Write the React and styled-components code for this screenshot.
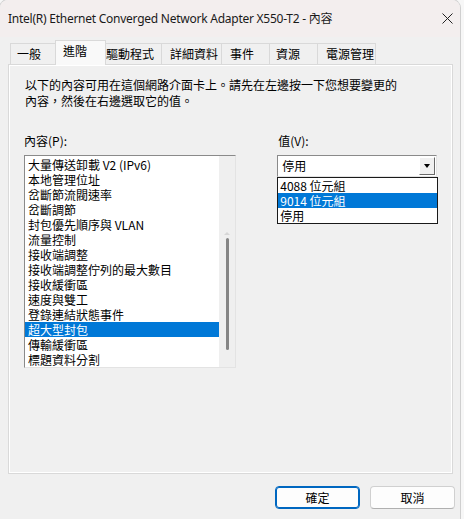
import React from 'react';
import styled, { createGlobalStyle } from 'styled-components';

const GlobalStyle = createGlobalStyle`
  html, body {
    margin: 0;
    padding: 0;
    background: #f7f7f7;
  }
  body {
    font-family: "Noto Sans CJK TC", "Noto Sans", sans-serif;
    font-size: 12px;
    color: #000;
  }
`;

const Window = styled.div`
  width: 460px;
  height: 519px;
  box-sizing: border-box;
  background: #f0f0f0;
  border-radius: 8px 8px 0 0;
  box-shadow: 0 0 0 1px #cfcfcf;
  display: flex;
  flex-direction: column;
  overflow: hidden;
`;

const TitleBar = styled.div`
  height: 37px;
  flex: none;
  background: #f3eeee;
  display: flex;
  align-items: center;
  justify-content: space-between;
  padding: 0 7px 0 8px;
`;

const Title = styled.div`
  font-family: "Noto Sans", "Noto Sans CJK TC", sans-serif;
  font-size: 12px;
  line-height: 16px;
  letter-spacing: -0.25px;
  color: #1a1a1a;
`;

const CloseIcon = () => (
  <svg width="11" height="11" viewBox="0 0 11 11">
    <path d="M0.5 0.5 L10.5 10.5 M10.5 0.5 L0.5 10.5" stroke="#222" strokeWidth="1" />
  </svg>
);

const Client = styled.div`
  padding: 3px 0 0 8px;
  display: flex;
  flex-direction: column;
`;

const TabRow = styled.div`
  height: 24px;
  display: flex;
  align-items: flex-end;
  padding-left: 2px;
  position: relative;
  z-index: 1;
`;

const Tab = styled.div`
  box-sizing: border-box;
  width: ${(p) => (p.$active ? p.$w + 4 : p.$w)}px;
  height: ${(p) => (p.$active ? 25 : 21)}px;
  margin: ${(p) => (p.$active ? '0 -2px -1px' : '0')};
  padding: ${(p) => (p.$active ? 2 : 2)}px 0 0 ${(p) => p.$pad}px;
  line-height: 16px;
  font-size: 12px;
  white-space: nowrap;
  background: ${(p) => (p.$active ? '#f9f9f9' : '#f0f0f0')};
  border: 1px solid #d9d9d9;
  border-bottom: none;
  margin-left: ${(p) => (p.$first ? 0 : p.$active ? -2 : -1)}px;
  position: relative;
  z-index: ${(p) => (p.$active ? 2 : 1)};
`;

const Panel = styled.div`
  box-sizing: border-box;
  width: 445px;
  height: 410px;
  background: #f0f0f0;
  border: 1px solid #d9d9d9;
  box-shadow: inset 1px 1px 0 #ffffff, inset -1px -1px 0 #ffffff;
  padding: 12px 15px;
`;

const Intro = styled.div`
  width: 378px;
  line-height: 16px;
  padding-left: 1px;
`;

const Columns = styled.div`
  display: flex;
  margin-top: 24px;
`;

const Column = styled.div`
  width: ${(p) => p.$w}px;
  margin-left: ${(p) => p.$ml || 0}px;
  position: relative;
`;

const Label = styled.div`
  line-height: 16px;
  margin-bottom: 6px;
  padding-left: ${(p) => p.$pl || 0}px;
`;

const ListBox = styled.div`
  box-sizing: border-box;
  height: 213px;
  background: #fff;
  border: 1px solid;
  border-color: #8a8a8a #e3e3e3 #e3e3e3 #8a8a8a;
  display: flex;
`;

const Items = styled.div`
  flex: 1;
  padding-top: 1px;
`;

const Item = styled.div`
  height: 15px;
  line-height: 15px;
  padding-left: 3px;
  white-space: nowrap;
  background: ${(p) => (p.$selected ? '#0078d7' : 'transparent')};
  color: ${(p) => (p.$selected ? '#fff' : '#000')};
`;

const ScrollTrack = styled.div`
  width: 16px;
  background: #efefef;
  display: flex;
  flex-direction: column;
  align-items: center;
  padding-top: 76px;
`;

const ArrowHint = styled.div`
  width: 0;
  height: 0;
  border-left: 3px solid transparent;
  border-right: 3px solid transparent;
  border-bottom: 3px solid #d6d6d6;
  margin-bottom: 3px;
`;

const Thumb = styled.div`
  width: 3px;
  height: 112px;
  border-radius: 2px;
  background: #858585;
`;

const Combo = styled.div`
  box-sizing: border-box;
  height: 22px;
  background: #fff;
  border: 1px solid;
  border-color: #8a8a8a #e3e3e3 #e3e3e3 #8a8a8a;
  display: flex;
  align-items: center;
  justify-content: space-between;
  padding: 0 1px 0 4px;
`;

const ComboValue = styled.div`
  line-height: 16px;
`;

const DropButton = styled.div`
  box-sizing: border-box;
  width: 16px;
  height: 18px;
  background: #f0f0f0;
  border: 1px solid;
  border-color: #ffffff #696969 #696969 #ffffff;
  display: flex;
  align-items: center;
  justify-content: center;
`;

const DownArrow = styled.div`
  width: 0;
  height: 0;
  border-left: 3.5px solid transparent;
  border-right: 3.5px solid transparent;
  border-top: 4px solid #000;
`;

const DropList = styled.div`
  position: absolute;
  left: 0;
  top: 44px;
  width: 161px;
  box-sizing: border-box;
  background: #fff;
  border: 1px solid #1a1a1a;
`;

const Option = styled.div`
  height: 15px;
  line-height: 15px;
  padding-left: 2px;
  background: ${(p) => (p.$selected ? '#0078d7' : 'transparent')};
  color: ${(p) => (p.$selected ? '#fff' : '#000')};
`;

const ButtonRow = styled.div`
  display: flex;
  justify-content: flex-end;
  gap: 10px;
  padding-right: 5px;
  margin-top: 12px;
`;

const Button = styled.button`
  box-sizing: border-box;
  width: 85px;
  height: 23px;
  border-radius: 4px;
  font-family: "Noto Sans CJK TC", "Noto Sans", sans-serif;
  font-size: 12px;
  color: #000;
  background: #fdfdfd;
  padding: 0;
  border: 1px solid ${(p) => (p.$primary ? '#0067c0' : '#d0d0d0')};
  border-bottom-color: ${(p) => (p.$primary ? '#0067c0' : '#b0b0b0')};
  box-shadow: ${(p) => (p.$primary ? 'inset 0 0 0 1px #0067c0' : 'none')};
`;

const tabs = [
  { label: '一般', w: 47, pad: 6 },
  { label: '進階', w: 47, pad: 7, active: true },
  { label: '驅動程式', w: 59, pad: 2 },
  { label: '詳細資料', w: 61, pad: 8 },
  { label: '事件', w: 49, pad: 8 },
  { label: '資源', w: 49, pad: 6 },
  { label: '電源管理', w: 59, pad: 8 },
];

const properties = [
  '大量傳送卸載 V2 (IPv6)',
  '本地管理位址',
  '岔斷節流閥速率',
  '岔斷調節',
  '封包優先順序與 VLAN',
  '流量控制',
  '接收端調整',
  '接收端調整佇列的最大數目',
  '接收緩衝區',
  '速度與雙工',
  '登錄連結狀態事件',
  '超大型封包',
  '傳輸緩衝區',
  '標題資料分割',
];

const options = ['4088 位元組', '9014 位元組', '停用'];

export default function App() {
  return (
    <>
      <GlobalStyle />
      <Window>
        <TitleBar>
          <Title>Intel(R) Ethernet Converged Network Adapter X550-T2 - 內容</Title>
          <CloseIcon />
        </TitleBar>
        <Client>
          <TabRow>
            {tabs.map((t, i) => (
              <Tab key={t.label} $w={t.w} $pad={t.pad} $active={t.active} $first={i === 0}>
                {t.label}
              </Tab>
            ))}
          </TabRow>
          <Panel>
            <Intro>
              以下的內容可用在這個網路介面卡上。請先在左邊按一下您想要變更的內容，然後在右邊選取它的值。
            </Intro>
            <Columns>
              <Column $w={214}>
                <Label>內容(P):</Label>
                <ListBox>
                  <Items>
                    {properties.map((p) => (
                      <Item key={p} $selected={p === '超大型封包'}>
                        {p}
                      </Item>
                    ))}
                  </Items>
                  <ScrollTrack>
                    <ArrowHint />
                    <Thumb />
                  </ScrollTrack>
                </ListBox>
              </Column>
              <Column $w={161} $ml={41}>
                <Label $pl={1}>值(V):</Label>
                <Combo>
                  <ComboValue>停用</ComboValue>
                  <DropButton>
                    <DownArrow />
                  </DropButton>
                </Combo>
                <DropList>
                  {options.map((o) => (
                    <Option key={o} $selected={o === '9014 位元組'}>
                      {o}
                    </Option>
                  ))}
                </DropList>
              </Column>
            </Columns>
          </Panel>
          <ButtonRow>
            <Button $primary>確定</Button>
            <Button>取消</Button>
          </ButtonRow>
        </Client>
      </Window>
    </>
  );
}
